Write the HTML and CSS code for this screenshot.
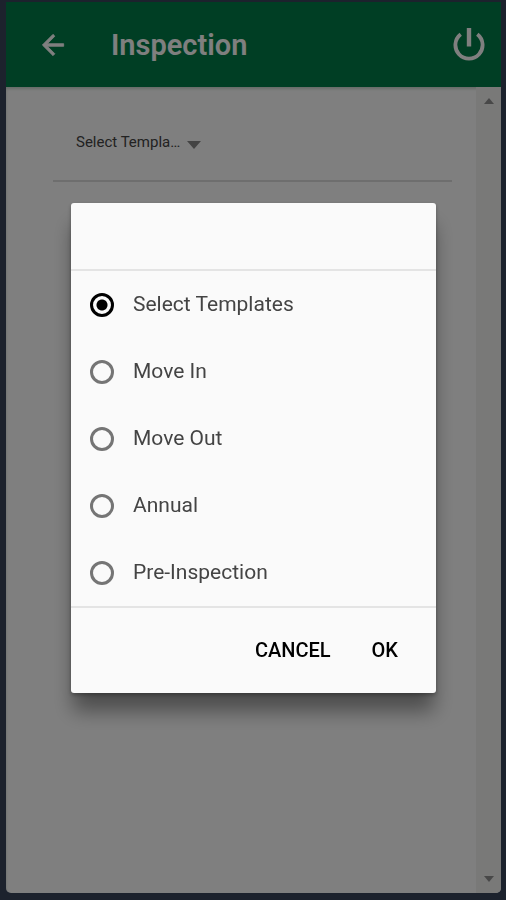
FILE: index.html
```html
<!DOCTYPE html>
<html lang="en">
<head>
<meta charset="utf-8">
<meta name="viewport" content="width=device-width, initial-scale=1">
<title>Inspection</title>
<link rel="stylesheet" href="styles.css">
</head>
<body>
<div class="app">
  <header class="bar">
    <button class="icon-button" type="button" aria-label="Back">
      <svg width="32" height="32" viewBox="0 0 24 24"><path fill="currentColor" stroke="currentColor" stroke-width=".6" d="M20 11H7.83l5.59-5.59L12 4l-8 8 8 8 1.41-1.41L7.83 13H20v-2z"/></svg>
    </button>
    <h1 class="title">Inspection</h1>
    <button class="icon-button" type="button" aria-label="Log out">
      <svg width="32" height="34" viewBox="0 0 32 34"><g fill="none" stroke="currentColor"><path stroke-width="4.4" d="M16 0v18.5"/><path stroke-width="3.8" d="M7.7 6.2a13.6 13.6 0 1 0 16.6 0"/></g></svg>
    </button>
  </header>
  <div class="body">
    <main class="content">
      <div class="field">
        <select class="picker" aria-label="Template">
          <option>Select Templates</option>
          <option>Move In</option>
          <option>Move Out</option>
          <option>Annual</option>
          <option>Pre-Inspection</option>
        </select>
        <svg class="caret" width="14" height="8" viewBox="0 0 14 8"><path fill="currentColor" d="M0 0h14L7 8z"/></svg>
      </div>
    </main>
    <div class="track" aria-hidden="true">
      <svg width="10" height="6" viewBox="0 0 10 6"><path fill="currentColor" d="M0 6h10L5 0z"/></svg>
      <svg width="10" height="6" viewBox="0 0 10 6"><path fill="currentColor" d="M0 0h10L5 6z"/></svg>
    </div>
  </div>
</div>
<div class="overlay">
  <form class="dialog" role="dialog" aria-modal="true" aria-label="Template">
    <div class="dialog-head"></div>
    <div class="options">
      <label class="option"><input class="radio" type="radio" name="template" checked>Select Templates</label>
      <label class="option"><input class="radio" type="radio" name="template">Move In</label>
      <label class="option"><input class="radio" type="radio" name="template">Move Out</label>
      <label class="option"><input class="radio" type="radio" name="template">Annual</label>
      <label class="option"><input class="radio" type="radio" name="template">Pre-Inspection</label>
    </div>
    <div class="actions">
      <button class="action" type="button">CANCEL</button>
      <button class="action" type="button">OK</button>
    </div>
  </form>
</div>
</body>
</html>
```
FILE: styles.css
```css
* {
  box-sizing: border-box;
}

body {
  margin: 0;
  background: #38445a;
  font-family: Roboto, "Liberation Sans", sans-serif;
}

button {
  padding: 0;
  border: 0;
  background: none;
  color: inherit;
  font: inherit;
}

svg {
  display: block;
}

.app {
  display: flex;
  flex-direction: column;
  min-height: 100vh;
  padding: 2px 5px 7px 6px;
}

.bar {
  display: flex;
  align-items: center;
  height: 85px;
  padding: 0 16px 0 31px;
  background: #007c48;
  color: #fff;
}

.title {
  flex: 1;
  margin: 0 0 0 42px;
  font-size: 29px;
  font-weight: 600;
  line-height: 36px;
}

.body {
  display: flex;
  flex: 1;
  border-radius: 0 0 5px 5px;
  background: #fff;
  box-shadow: inset 0 2px 3px #ccd8d0;
  overflow: hidden;
}

.content {
  flex: 1;
  padding: 0 24px 0 47px;
}

.field {
  display: flex;
  align-items: center;
  height: 95px;
  padding: 16px 22px 0 23px;
  border-bottom: 2px solid #dcdcdc;
}

.picker {
  width: 108px;
  height: 24px;
  padding: 0;
  border: 0;
  appearance: none;
  background: none;
  color: #444;
  font-family: inherit;
  font-size: 15px;
  text-overflow: ellipsis;
  white-space: nowrap;
  overflow: hidden;
}

.caret {
  margin: 6px 0 0 3px;
  color: #888;
}

.track {
  display: flex;
  flex-direction: column;
  align-items: center;
  justify-content: space-between;
  width: 25px;
  padding: 11px 0;
  background: #f2f2f1;
  color: #909090;
}

.overlay {
  position: fixed;
  inset: 0;
  display: flex;
  align-items: center;
  justify-content: center;
  padding: 0 70px 4px 71px;
  background: rgba(0, 0, 0, 0.5);
}

.dialog {
  flex: 1;
  max-width: 420px;
  border-radius: 3px;
  background: #fafafa;
  box-shadow: 0 20px 20px -2px rgba(0, 0, 0, 0.4), 0 2px 4px rgba(0, 0, 0, 0.3);
}

.dialog-head {
  height: 66px;
}

.options {
  border-top: 2px solid #e4e4e4;
  border-bottom: 2px solid #e4e4e4;
}

.option {
  display: flex;
  align-items: center;
  gap: 19px;
  height: 67px;
  padding: 0 19px 2px;
  color: #444;
  font-size: 21px;
  line-height: 28px;
}

.radio {
  width: 24px;
  height: 24px;
  margin: 2px 0 0;
  border: 3px solid #757575;
  border-radius: 50%;
  appearance: none;
}

.radio:checked {
  border-color: #000;
  background: radial-gradient(circle, #000 5px, transparent 6px);
}

.actions {
  display: flex;
  align-items: center;
  justify-content: flex-end;
  gap: 41px;
  height: 85px;
  padding: 0 38px 2px;
}

.action {
  color: #000;
  font-size: 20px;
  font-weight: 500;
  line-height: 28px;
}
```
